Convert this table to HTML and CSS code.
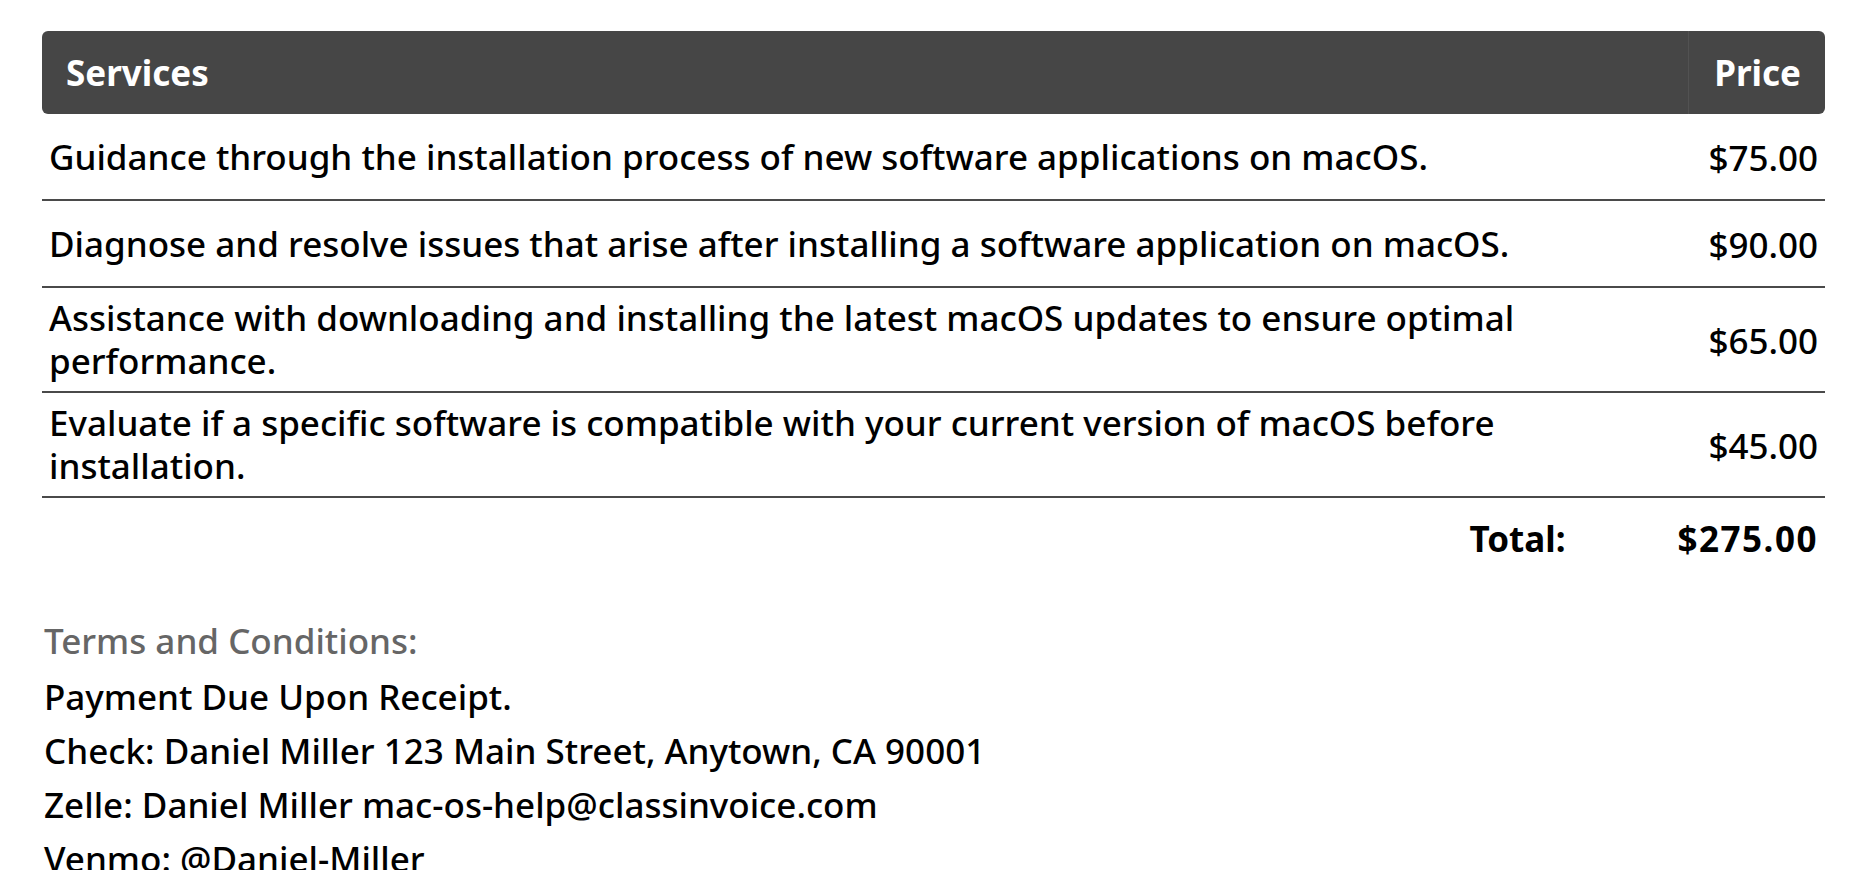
FILE: index.html
```html
<!DOCTYPE html>
<html>
<head>
<meta charset="utf-8">
<link rel="stylesheet" href="styles.css">
</head>
<body>
<div class="page">
  <table class="items">
    <thead>
      <tr>
        <th class="col-desc">Services</th>
        <th class="col-price">Price</th>
      </tr>
    </thead>
    <tbody>
      <tr>
        <td class="desc">Guidance through the installation process of new software applications on macOS.</td>
        <td class="price">$75.00</td>
      </tr>
      <tr>
        <td class="desc">Diagnose and resolve issues that arise after installing a software application on macOS.</td>
        <td class="price">$90.00</td>
      </tr>
      <tr>
        <td class="desc">Assistance with downloading and installing the latest macOS updates to ensure optimal performance.</td>
        <td class="price">$65.00</td>
      </tr>
      <tr>
        <td class="desc">Evaluate if a specific software is compatible with your current version of macOS before installation.</td>
        <td class="price">$45.00</td>
      </tr>
    </tbody>
  </table>
  <div class="total-row">
    <span class="total-label">Total:</span>
    <span class="total-value">$275.00</span>
  </div>
  <div class="terms">
    <div class="terms-title">Terms and Conditions:</div>
    <div class="terms-line">Payment Due Upon Receipt.</div>
    <div class="terms-line">Check: Daniel Miller 123 Main Street, Anytown, CA 90001</div>
    <div class="terms-line">Zelle: Daniel Miller mac-os-help@classinvoice.com</div>
    <div class="terms-line">Venmo: @Daniel-Miller</div>
  </div>
</div>
</body>
</html>
```

FILE: styles.css
```css
html, body {
  margin: 0;
  padding: 0;
  background: #ffffff;
}
body {
  font-family: "Noto Sans", "DejaVu Sans", sans-serif;
  color: #000;
  overflow: hidden;
}
.page {
  padding: 31px 43px 0 42px;
}
.items {
  width: 100%;
  border-collapse: separate;
  border-spacing: 0;
  font-size: 35px;
  font-weight: 500;
  line-height: 43px;
}
.items thead th {
  background: #464646;
  color: #fff;
  font-weight: 700;
  font-size: 35px;
  height: 83px;
  padding: 0 24px;
  vertical-align: middle;
}
.col-desc {
  text-align: left;
  border-radius: 6px 0 0 6px;
}
.col-price {
  text-align: right;
  width: 88px;
  border-left: 1px solid #525252;
  border-radius: 0 6px 6px 0;
}
.items td {
  border-bottom: 2px solid #4a4a4a;
  vertical-align: middle;
}
.desc {
  padding: 8px 7px 9px 7px;
}
.price {
  text-align: right;
  padding: 22px 7px 20px 7px;
  white-space: nowrap;
}
.total-row {
  display: flex;
  justify-content: flex-end;
  align-items: center;
  height: 80px;
  font-size: 35px;
  font-weight: 700;
  padding-right: 7px;
}
.total-label {
  margin-right: 112px;
}
.total-value {
  letter-spacing: 1.5px;
}
.terms {
  margin-top: 36px;
  padding-left: 2px;
  font-size: 35px;
  font-weight: 500;
  line-height: 54px;
}
.terms-title {
  color: #666666;
  margin-bottom: 2px;
}
```
